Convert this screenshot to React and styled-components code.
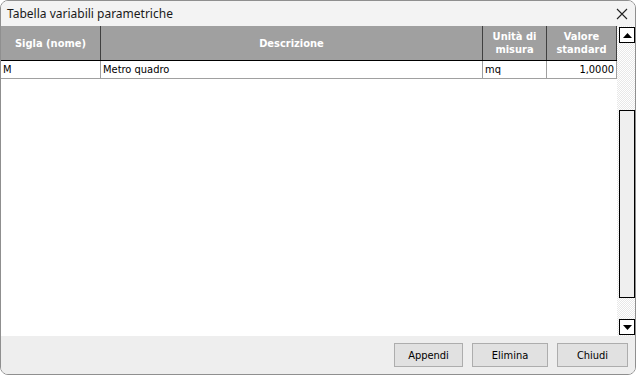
import React from 'react';
import styled, { createGlobalStyle } from 'styled-components';

const GlobalStyle = createGlobalStyle`
  html, body {
    margin: 0;
    padding: 0;
    background: #ffffff;
  }
`;

const Window = styled.div`
  width: 636px;
  height: 375px;
  box-sizing: border-box;
  display: flex;
  flex-direction: column;
  border: 1px solid #8f8f8f;
  border-radius: 8px;
  overflow: hidden;
  background: #ffffff;
`;

const TitleBar = styled.div`
  height: 25px;
  flex: none;
  display: flex;
  align-items: center;
  justify-content: space-between;
  padding: 0 6px 0 6px;
  background: #f3f3f3;
  font-family: 'Noto Sans', 'Open Sans', sans-serif;
  font-size: 12px;
  color: #1a1a1a;
`;

const CloseButton = styled.div`
  width: 14px;
  height: 14px;
  display: flex;
  align-items: center;
  justify-content: center;
`;

const Main = styled.div`
  flex: 1;
  display: flex;
  min-height: 0;
`;

const GridArea = styled.div`
  flex: 1;
  display: flex;
  flex-direction: column;
  background: #ffffff;
`;

const Row = styled.div`
  display: grid;
  grid-template-columns: 100px 382px 64px 70px;
  height: ${(p) => p.$height}px;
  box-sizing: border-box;
  border-bottom: 1px solid ${(p) => p.$line};
`;

const HeadCell = styled.div`
  background: #a0a0a0;
  color: #ffffff;
  font-family: 'DejaVu Sans Condensed', 'DejaVu Sans', sans-serif;
  font-weight: bold;
  font-size: 11px;
  line-height: 13px;
  display: flex;
  align-items: center;
  justify-content: center;
  text-align: center;
  border-right: 1px solid #404040;
`;

const Cell = styled.div`
  font-family: 'DejaVu Sans Condensed', 'DejaVu Sans', sans-serif;
  font-size: 11px;
  color: #000000;
  display: flex;
  align-items: center;
  justify-content: ${(p) => (p.$right ? 'flex-end' : 'flex-start')};
  padding: 0 2px;
  border-right: 1px solid #a0a0a0;
`;

const ScrollBar = styled.div`
  width: 18px;
  flex: none;
  display: flex;
  flex-direction: column;
  align-items: flex-end;
  padding: 1px 0 1px 0;
  box-sizing: border-box;
  background-color: #f4f4f4;
  background-image: repeating-conic-gradient(#ffffff 0 25%, #e8e8e8 0 50%);
  background-size: 2px 2px;
`;

const ArrowButton = styled.div`
  width: 16px;
  height: 16px;
  box-sizing: border-box;
  border: 1px solid #000000;
  background: #ffffff;
  display: flex;
  align-items: center;
  justify-content: center;
  flex: none;
`;

const Track = styled.div`
  flex: 1;
  display: flex;
  flex-direction: column;
  align-items: flex-end;
  padding: 67px 0 0 0;
`;

const Thumb = styled.div`
  width: 16px;
  height: 188px;
  box-sizing: border-box;
  border: 1px solid #000000;
  background: #efefef;
`;

const Footer = styled.div`
  height: 38px;
  flex: none;
  display: flex;
  align-items: center;
  justify-content: flex-end;
  gap: 9px;
  padding: 0 7px 0 0;
  background: #eeeeee;
`;

const Button = styled.button`
  width: ${(p) => p.$width}px;
  height: 24px;
  box-sizing: border-box;
  border: 1px solid #adadad;
  background: #e1e1e1;
  font-family: 'DejaVu Sans Condensed', 'DejaVu Sans', sans-serif;
  font-size: 11px;
  color: #000000;
  padding: 0;
`;

const UpArrow = () => (
  <svg width="9" height="5" viewBox="0 0 9 5">
    <path d="M0 5 L4.5 0 L9 5 Z" fill="#000" />
  </svg>
);

const DownArrow = () => (
  <svg width="9" height="5" viewBox="0 0 9 5">
    <path d="M0 0 L9 0 L4.5 5 Z" fill="#000" />
  </svg>
);

const App = () => {
  return (
    <>
      <GlobalStyle />
      <Window>
        <TitleBar>
          <span>Tabella variabili parametriche</span>
          <CloseButton>
            <svg width="12" height="12" viewBox="0 0 12 12">
              <path d="M1 1 L11 11 M11 1 L1 11" stroke="#222" strokeWidth="1.1" />
            </svg>
          </CloseButton>
        </TitleBar>
        <Main>
          <GridArea>
            <Row $height={35} $line="#000000">
              <HeadCell>Sigla (nome)</HeadCell>
              <HeadCell>Descrizione</HeadCell>
              <HeadCell>Unità di<br />misura</HeadCell>
              <HeadCell>Valore<br />standard</HeadCell>
            </Row>
            <Row $height={18} $line="#a0a0a0">
              <Cell>M</Cell>
              <Cell>Metro quadro</Cell>
              <Cell>mq</Cell>
              <Cell $right>1,0000</Cell>
            </Row>
          </GridArea>
          <ScrollBar>
            <ArrowButton>
              <UpArrow />
            </ArrowButton>
            <Track>
              <Thumb />
            </Track>
            <ArrowButton>
              <DownArrow />
            </ArrowButton>
          </ScrollBar>
        </Main>
        <Footer>
          <Button $width={69}>Appendi</Button>
          <Button $width={76}>Elimina</Button>
          <Button $width={71}>Chiudi</Button>
        </Footer>
      </Window>
    </>
  );
};

export default App;
